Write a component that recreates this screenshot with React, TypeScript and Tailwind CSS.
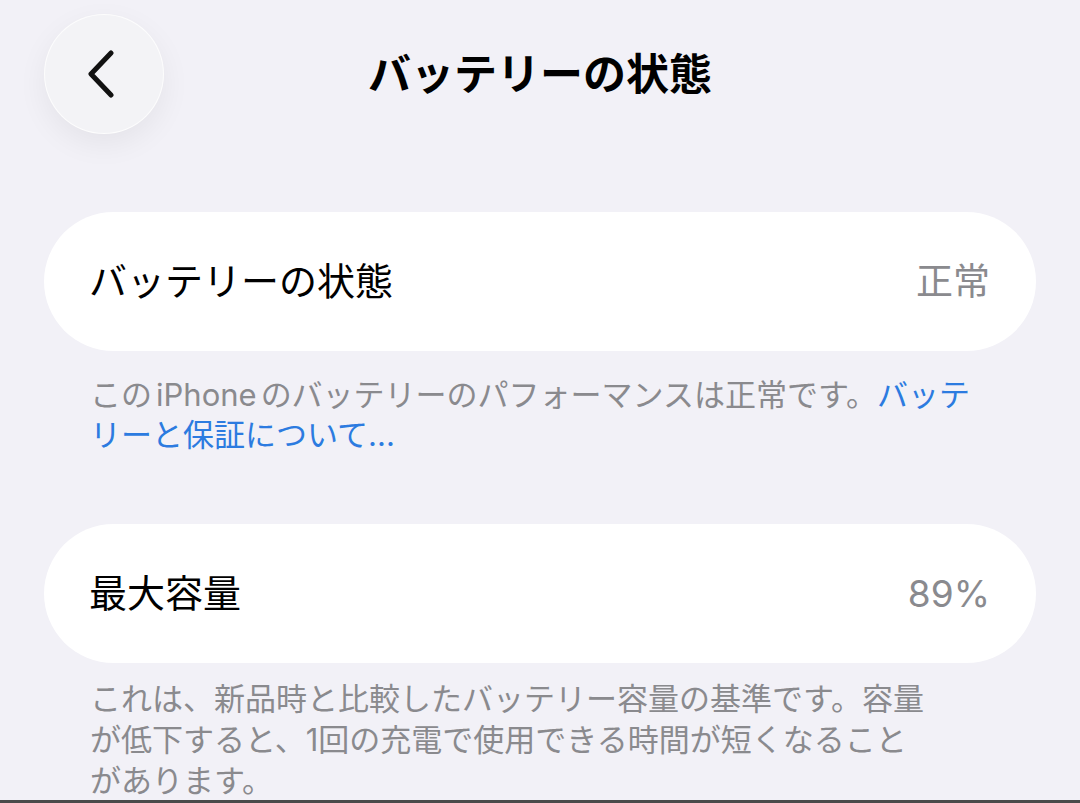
import React from 'react';

const FONT = '"Inter", "Noto Sans CJK JP", sans-serif';

interface RowProps {
    label: string;
    value: string;
}

function Row({ label, value }: RowProps) {
    return (
        <div className="mx-[44px] h-[139px] rounded-full bg-white flex items-center justify-between pl-[45px] pr-[46px]">
            <span className="text-[38px] text-black">{label}</span>
            <span className="text-[37px] text-[#8a8a8e]">{value}</span>
        </div>
    );
}

function Footer({ children, className = '' }: { children: React.ReactNode; className?: string }) {
    return (
        <p className={`mx-[90px] text-[31px] leading-[40px] text-[#8a8a8e] ${className}`}>
            {children}
        </p>
    );
}

export default function App() {
    return (
        <div
            className="w-[1080px] h-[803px] overflow-hidden bg-[#f2f1f7] flex flex-col border-b-[3px] border-[#4a4a4a]"
            style={{ fontFamily: FONT }}
        >
            {/* Header */}
            <div className="grid grid-cols-[120px_1fr_120px] items-center px-[44px] pt-[14px]">
                <button className="w-[120px] h-[120px] rounded-full bg-[#f3f3f6] flex items-center justify-center shadow-[0_10px_30px_rgba(0,0,0,0.06)] border border-white/80">
                    <svg width="30" height="48" viewBox="0 0 30 48" fill="none" className="-ml-[6px]">
                        <path
                            d="M25 3 L5 24 L25 45"
                            stroke="#111"
                            strokeWidth="5"
                            strokeLinecap="round"
                            strokeLinejoin="round"
                        />
                    </svg>
                </button>
                <h1 className="text-center text-[43px] font-bold text-black">バッテリーの状態</h1>
                <div />
            </div>

            {/* Battery health */}
            <div className="mt-[78px]">
                <Row label="バッテリーの状態" value="正常" />
            </div>
            <Footer className="mt-[24px]">
                この<span className="mx-[4px]">iPhone</span>のバッテリーのパフォーマンスは正常です。<span className="text-[#2c7be0]">バッテ<br />リーと保証について...</span>
            </Footer>

            {/* Max capacity */}
            <div className="mt-[69px]">
                <Row label="最大容量" value="89%" />
            </div>
            <Footer className="mt-[15px] leading-[41px]">
                これは、新品時と比較したバッテリー容量の基準です。容量<br />
                が低下すると、1回の充電で使用できる時間が短くなること<br />
                があります。
            </Footer>
        </div>
    );
}
